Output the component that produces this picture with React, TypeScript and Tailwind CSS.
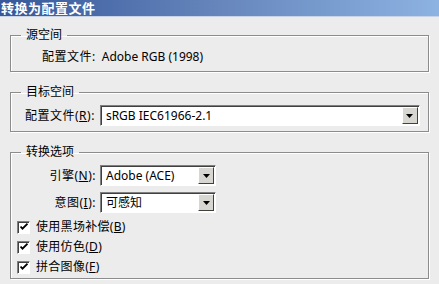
import { ReactNode } from 'react'

const font = { fontFamily: '"Noto Sans", "Noto Sans CJK SC", sans-serif' }

function Group({ title, className, children }: { title: string; className: string; children: ReactNode }) {
  return (
    <fieldset className={`border border-[#8c8c8c] shadow-[inset_1px_1px_0_#ffffff,1px_1px_0_#ffffff] ml-[10px] w-[419px] ${className}`}>
      <legend className="ml-[10px] px-[5px] text-[12px] leading-[16px] text-black">{title}</legend>
      {children}
    </fieldset>
  )
}

function Select({ value, width }: { value: string; width: string }) {
  return (
    <div className={`flex items-center h-[21px] bg-white border border-[#808080] border-r-white border-b-white shadow-[inset_1px_1px_0_#404040] ${width}`}>
      <span className="flex-1 pl-[5px] text-[12px] leading-[16px] text-black">{value}</span>
      <div className="w-[16px] h-[17px] mr-[1px] flex items-center justify-center bg-[#d8d6d0] border border-white border-r-[#404040] border-b-[#404040]">
        <svg width="7" height="4" viewBox="0 0 7 4">
          <path d="M0 0h7L3.5 4z" fill="#000" />
        </svg>
      </div>
    </div>
  )
}

function Check({ label, k }: { label: string; k: string }) {
  return (
    <div className="flex items-center gap-[6px] h-[20px]">
      <div className="w-[13px] h-[13px] bg-white border border-[#808080] border-r-white border-b-white shadow-[inset_1px_1px_0_#404040] flex items-center justify-center">
        <svg width="8" height="8" viewBox="0 0 8 8">
          <path d="M0.5 3.5l2 2.2 5-5" stroke="#000" strokeWidth="1.8" fill="none" />
        </svg>
      </div>
      <span className="text-[12px] leading-[16px] tracking-[0.3px]">
        {label}(<span className="underline">{k}</span>)
      </span>
    </div>
  )
}

export default function App() {
  return (
    <div className="w-[439px] h-[284px] bg-[#ececec] overflow-hidden text-black" style={font}>
      <div className="h-[17px] bg-gradient-to-r from-[#36589a] via-[#6686bc] to-[#8db3e2] border-b border-[#c8d4e6] flex items-center pl-[1px]">
        <span className="text-white font-bold text-[13px] leading-[16px] tracking-[0.5px]">转换为配置文件</span>
      </div>

      <Group title="源空间" className="mt-[10px] h-[45px]">
        <div className="pl-[31px] pt-[6px] text-[12px] leading-[16px]">
          <span className="tracking-[0.5px]">配置文件:</span>
          <span className="ml-[6px]">Adobe RGB (1998)</span>
        </div>
      </Group>

      <Group title="目标空间" className="mt-[12px] h-[48px]">
        <div className="flex items-center pl-[14px] pt-[5px] gap-[5px]">
          <span className="text-[12px] leading-[16px] tracking-[0.5px]">配置文件(<span className="underline">R</span>):</span>
          <Select value="sRGB IEC61966-2.1" width="w-[320px]" />
        </div>
      </Group>

      <Group title="转换选项" className="mt-[12px] h-[135px]">
        <div className="flex flex-col pt-[5px]">
          <div className="flex items-center justify-end w-[205px] gap-[4px]">
            <span className="text-[12px] leading-[16px] tracking-[0.5px]">引擎(<span className="underline">N</span>):</span>
            <Select value="Adobe (ACE)" width="w-[116px]" />
          </div>
          <div className="flex items-center justify-end w-[205px] gap-[4px] mt-[6px]">
            <span className="text-[12px] leading-[16px] tracking-[0.5px]">意图(<span className="underline">I</span>):</span>
            <Select value="可感知" width="w-[116px]" />
          </div>
          <div className="pl-[6px] mt-[4px]">
            <Check label="使用黑场补偿" k="B" />
            <Check label="使用仿色" k="D" />
            <Check label="拼合图像" k="F" />
          </div>
        </div>
      </Group>
    </div>
  )
}
